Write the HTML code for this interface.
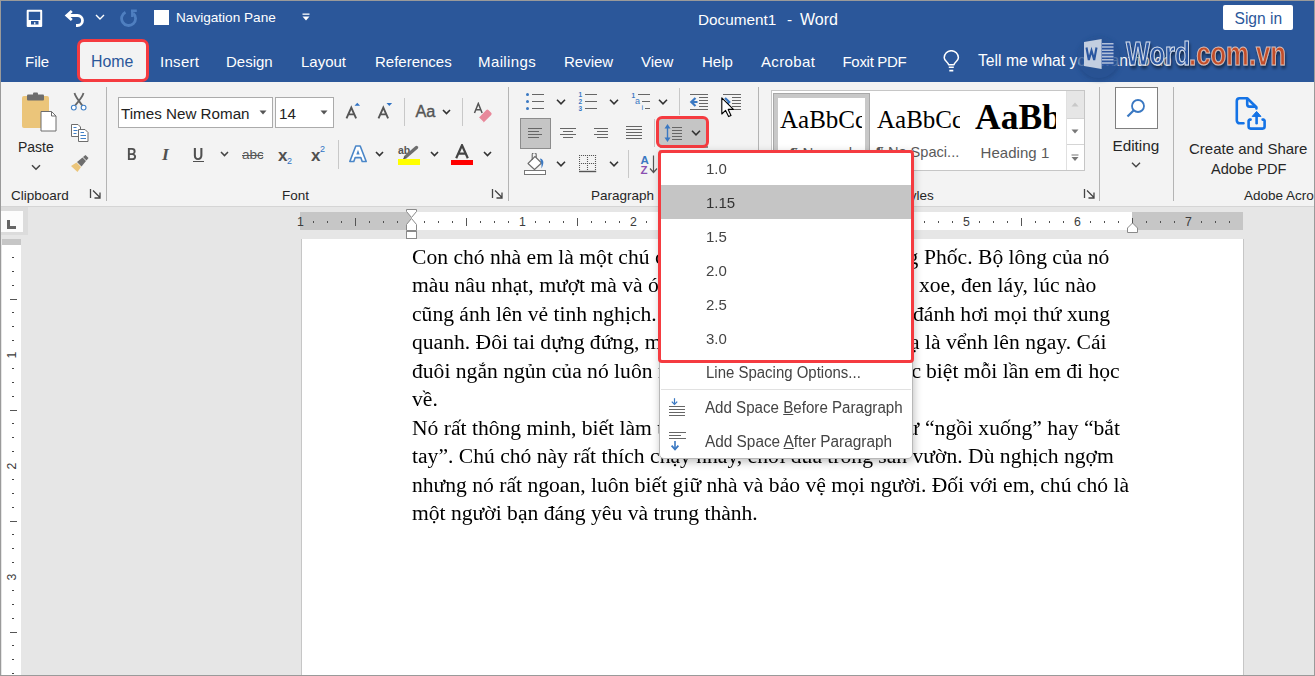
<!DOCTYPE html>
<html><head><meta charset="utf-8">
<style>
*{box-sizing:border-box;margin:0;padding:0}
html,body{width:1315px;height:676px;overflow:hidden;background:#e6e6e6}
body{position:relative;font-family:"Liberation Sans",sans-serif}
.a{position:absolute}
.t{position:absolute;white-space:nowrap;line-height:1}
#title{left:0;top:0;width:1315px;height:82px;background:#2b579a}
.wt{color:#fff}
#ribbon{left:0;top:82px;width:1315px;height:124px;background:#f3f3f3}
#rb{left:0;top:206px;width:1315px;height:1px;background:#d5d5d5}
.sep{position:absolute;width:1px;background:#c8c8c8}
.gsep{position:absolute;width:1px;background:#b4b4b4;top:87px;height:114px}
.lbl{position:absolute;white-space:nowrap;line-height:1;font-size:13.5px;color:#262626}
.doc{will-change:transform;font-family:"Liberation Serif",serif;font-size:21.6px;color:#000;position:absolute;white-space:nowrap;line-height:1}
#frame{left:0;top:0;width:1315px;height:676px;border:1px solid #9a9a9a;pointer-events:none}
</style></head><body>
<div id="title" class="a"></div>

<!-- title bar -->
<svg class="a" style="left:26px;top:9px" width="18" height="18" viewBox="0 0 18 18">
 <path d="M1.7 1.7 H15.2 V17 H1.7 Z" fill="none" stroke="#fff" stroke-width="2" stroke-linejoin="round"/>
 <rect x="1" y="11" width="15" height="6" fill="#fff"/>
 <rect x="5" y="12" width="7.5" height="3.5" fill="#2b579a"/>
 <rect x="8.1" y="13.2" width="1.3" height="2.3" fill="#fff"/>
</svg>
<svg class="a" style="left:64px;top:9px" width="22" height="19" viewBox="0 0 22 19">
 <path d="M3.5 6.5 H13.5 A5 5 0 0 1 13.5 16.5 H12" fill="none" stroke="#fff" stroke-width="2.8"/>
 <path d="M7.8 2 L2.8 6.5 L7.8 11" fill="none" stroke="#fff" stroke-width="2.8" stroke-linejoin="miter"/>
</svg>
<svg class="a" style="left:95px;top:14px" width="10" height="6" viewBox="0 0 10 6"><path d="M1 1 L5 5 L9 1" fill="none" stroke="#fff" stroke-width="1.4"/></svg>
<svg class="a" style="left:120px;top:9px" width="19" height="19" viewBox="0 0 19 19">
 <path d="M13.2 4.2 A7 7 0 1 1 5.5 3.2" fill="none" stroke="#4f7fc0" stroke-width="2.8"/>
 <path d="M11 1.8 H16.8 M12.3 1.8 V8" fill="none" stroke="#4f7fc0" stroke-width="2.4"/>
</svg>
<div class="a" style="left:154px;top:10px;width:15px;height:15px;background:#fff"></div>
<div class="t wt" style="left:176px;top:11px;font-size:13.6px">Navigation Pane</div>
<svg class="a" style="left:302px;top:13px" width="8" height="9" viewBox="0 0 8 9"><rect x="0.5" y="0.5" width="7" height="1.3" fill="#fff"/><path d="M0.5 3.5 H7.5 L4 7.5 Z" fill="#fff"/></svg>
<div class="t wt" style="left:698px;top:12px;font-size:15.3px">Document1</div>
<div class="t wt" style="left:787px;top:12px;font-size:15.3px">-</div>
<div class="t wt" style="left:800px;top:12px;font-size:16px">Word</div>
<div class="a" style="left:1223px;top:5px;width:70px;height:25px;background:#fff;border-radius:2px"></div>
<div class="t" style="left:1234.5px;top:11px;font-size:15.6px;color:#2b579a">Sign in</div>

<!-- tabs -->
<div class="t wt" style="left:25px;top:54px;font-size:15px">File</div>
<div class="a" style="left:77px;top:39px;width:72px;height:43px;background:#f3f3f3;border:3px solid #f53b40;border-radius:7px"></div>
<div class="t" style="left:91px;top:53.5px;font-size:15.9px;color:#2b579a">Home</div>
<div class="t wt" style="left:160px;top:54px;font-size:15px;letter-spacing:0.3px">Insert</div>
<div class="t wt" style="left:226px;top:54px;font-size:15px">Design</div>
<div class="t wt" style="left:301px;top:54px;font-size:15px">Layout</div>
<div class="t wt" style="left:375px;top:54px;font-size:15px">References</div>
<div class="t wt" style="left:478px;top:54px;font-size:15px;letter-spacing:0.4px">Mailings</div>
<div class="t wt" style="left:564px;top:54px;font-size:15px">Review</div>
<div class="t wt" style="left:641px;top:54px;font-size:15px">View</div>
<div class="t wt" style="left:702px;top:54px;font-size:15px">Help</div>
<div class="t wt" style="left:761px;top:54px;font-size:15px;letter-spacing:0.35px">Acrobat</div>
<div class="t wt" style="left:842.5px;top:54px;font-size:15px;letter-spacing:-0.3px">Foxit PDF</div>
<svg class="a" style="left:942px;top:50px" width="20" height="23" viewBox="0 0 20 23">
 <path d="M6.6 14.8 C6.6 12.2 2.2 11 2.2 7.8 A7.1 7.1 0 0 1 16.4 7.8 C16.4 11 12 12.2 12 14.8 Z" fill="none" stroke="#fff" stroke-width="1.5" stroke-linejoin="round"/>
 <path d="M6.8 17.2 H11.8 M7.3 20.6 H11.3" stroke="#fff" stroke-width="1.6"/>
</svg>
<div class="t wt" style="left:978px;top:53px;font-size:15.7px">Tell me what you want to do</div>
<div id="ribbon" class="a"></div>
<div id="rb" class="a"></div>
<!-- CLIPBOARD -->
<svg class="a" style="left:20px;top:92px" width="38" height="41" viewBox="0 0 38 41">
 <rect x="2" y="4" width="27" height="32" rx="2" fill="#ebc57a"/>
 <rect x="7" y="2.5" width="17" height="6" rx="1" fill="#6d6d6d"/>
 <rect x="13" y="0.5" width="5" height="4" rx="1" fill="#6d6d6d"/>
 <path d="M21 19.5 H31.5 L36 24 V39 H21 Z" fill="#fff" stroke="#6d6d6d" stroke-width="1"/>
 <path d="M31.5 19.5 V24 H36" fill="none" stroke="#6d6d6d" stroke-width="1"/>
</svg>
<div class="t" style="left:18px;top:140px;font-size:14px;color:#262626">Paste</div>
<svg class="a" style="left:31px;top:164px" width="10" height="7" viewBox="0 0 10 7"><path d="M1 1.2 L5 5.2 L9 1.2" fill="none" stroke="#444" stroke-width="1.5"/></svg>
<svg class="a" style="left:70px;top:92px" width="19" height="20" viewBox="0 0 19 20">
 <path d="M4.5 1 C5.5 5 9 9 12.2 13.4 M13.5 1 C12.5 5 9 9 5.2 13.4" fill="none" stroke="#666" stroke-width="1.8"/>
 <circle cx="3.8" cy="15.6" r="2.4" fill="#fff" stroke="#3f7fc6" stroke-width="1.1"/>
 <circle cx="13.6" cy="15.6" r="2.4" fill="#fff" stroke="#3f7fc6" stroke-width="1.1"/>
</svg>
<svg class="a" style="left:70px;top:123px" width="20" height="20" viewBox="0 0 20 20">
 <path d="M1.5 1.5 H8 L10.5 4 V13.5 H1.5 Z" fill="#fff" stroke="#6d6d6d" stroke-width="1"/>
 <path d="M3.5 4.5 H6.5 M3.5 7.5 H7.5 M3.5 10.5 H6.5" stroke="#3f7fc6" stroke-width="1"/>
 <path d="M8.5 6.5 H15 L18 9.5 V18.5 H8.5 Z" fill="#fff" stroke="#6d6d6d" stroke-width="1"/>
 <path d="M10.5 9.5 H14 M10.5 12.5 H16 M10.5 15.5 H16" stroke="#3f7fc6" stroke-width="1"/>
</svg>
<svg class="a" style="left:70px;top:155px" width="20" height="18" viewBox="0 0 20 18">
 <path d="M1 11 L6.5 7.5 L11 12 L7.5 17 Z" fill="#ebc57a"/>
 <path d="M7 7 L12.5 2.5 L16 6 L11.5 11.5 Z" fill="#6d6d6d"/>
 <path d="M13 2 L15.5 0 L18.5 3 L16.5 5.5 Z" fill="#6d6d6d"/>
</svg>
<div class="lbl" style="left:11px;top:189px">Clipboard</div>
<svg class="a" style="left:89px;top:188px" width="13" height="12" viewBox="0 0 13 12"><path d="M1.5 1 V10" stroke="#444" stroke-width="1.3"/><path d="M4 2.5 L11 9.5 M11 4.5 V10 H5.5" fill="none" stroke="#444" stroke-width="1.3"/></svg>
<div class="gsep" style="left:106px"></div>




<!-- WATERMARK -->
<svg class="a" style="left:1060px;top:28px" width="240" height="56" viewBox="0 0 240 56">
 <defs>
  <filter id="sh" x="-20%" y="-20%" width="140%" height="160%"><feGaussianBlur in="SourceAlpha" stdDeviation="1.6"/><feOffset dx="1" dy="2.5"/><feComponentTransfer><feFuncA type="linear" slope="0.5"/></feComponentTransfer><feMerge><feMergeNode/><feMergeNode in="SourceGraphic"/></feMerge></filter>
  <filter id="cs" x="-30%" y="-30%" width="160%" height="160%"><feGaussianBlur stdDeviation="2"/></filter>
 </defs>
 <circle cx="39" cy="31" r="21.5" fill="#1a3f78" opacity="0.5" filter="url(#cs)"/>
 <circle cx="38.5" cy="29" r="21" fill="#2b569a" opacity="0.6"/>
 <rect x="41" y="14.5" width="13" height="23" fill="#2a54a0" opacity="0.85"/>
 <path d="M42 15.8 H53.5 M42 19 H53.5 M42 22.2 H53.5 M42 25.4 H53.5 M42 28.6 H53.5 M42 31.8 H53.5 M42 35 H53.5" stroke="#c9d3e3" stroke-width="1.6" opacity="0.85"/>
 <path d="M24 14 L41.6 11 V41 L24 38 Z" fill="#c3cee0"/>
 <path d="M26.5 19.5 L28.8 32 L31.5 22.5 L34.2 32 L36.5 19.5" fill="none" stroke="#2a56a0" stroke-width="2.1" stroke-linejoin="miter"/>
 <g filter="url(#sh)" font-family="Liberation Sans" font-weight="bold" font-size="34">
  <text x="0" y="38" transform="translate(66,0) scale(0.745,0.97)" fill="#2b56a0" stroke="#e8ecf3" stroke-width="1.2" stroke-opacity="0.9">Word</text>
  <text x="0" y="38" transform="translate(129,0) scale(0.755,0.97)" fill="#c24e2a" stroke="#eed6cc" stroke-width="1.1" stroke-opacity="0.8">.com.vn</text>
 </g>
</svg>
<!-- RULERS -->
<div class="a" style="left:1px;top:207px;width:27px;height:28px;background:#dcdcdc"></div>
<div class="a" style="left:1px;top:211px;width:22px;height:21px;background:#fcfcfc"></div>
<div class="a" style="left:7px;top:220px;width:2.5px;height:8.5px;background:#666"></div><div class="a" style="left:7px;top:226px;width:9px;height:2.5px;background:#666"></div>
<div class="a" style="left:300px;top:212px;width:943px;height:18px;background:#c6c6c6"></div>
<div class="a" style="left:411px;top:212px;width:721px;height:18px;background:#fff"></div>
<div class="a" style="left:313.4px;top:221px;width:1px;height:2px;background:#505050"></div>
<div class="a" style="left:327.2px;top:221px;width:1px;height:2px;background:#505050"></div>
<div class="a" style="left:341.1px;top:221px;width:1px;height:2px;background:#505050"></div>
<div class="a" style="left:355.0px;top:218px;width:1px;height:8px;background:#555"></div>
<div class="a" style="left:368.9px;top:221px;width:1px;height:2px;background:#505050"></div>
<div class="a" style="left:382.8px;top:221px;width:1px;height:2px;background:#505050"></div>
<div class="a" style="left:396.6px;top:221px;width:1px;height:2px;background:#505050"></div>
<div class="a" style="left:424.4px;top:221px;width:1px;height:2px;background:#505050"></div>
<div class="a" style="left:438.2px;top:221px;width:1px;height:2px;background:#505050"></div>
<div class="a" style="left:452.1px;top:221px;width:1px;height:2px;background:#505050"></div>
<div class="a" style="left:466.0px;top:218px;width:1px;height:8px;background:#555"></div>
<div class="a" style="left:479.9px;top:221px;width:1px;height:2px;background:#505050"></div>
<div class="a" style="left:493.8px;top:221px;width:1px;height:2px;background:#505050"></div>
<div class="a" style="left:507.6px;top:221px;width:1px;height:2px;background:#505050"></div>
<div class="t" style="left:297.0px;top:216px;width:7px;text-align:center;font-size:12.3px;color:#3c3c3c">1</div>
<div class="t" style="left:519.0px;top:216px;width:7px;text-align:center;font-size:12.3px;color:#3c3c3c">1</div>
<div class="a" style="left:535.4px;top:221px;width:1px;height:2px;background:#505050"></div>
<div class="a" style="left:549.2px;top:221px;width:1px;height:2px;background:#505050"></div>
<div class="a" style="left:563.1px;top:221px;width:1px;height:2px;background:#505050"></div>
<div class="a" style="left:577.0px;top:218px;width:1px;height:8px;background:#555"></div>
<div class="a" style="left:590.9px;top:221px;width:1px;height:2px;background:#505050"></div>
<div class="a" style="left:604.8px;top:221px;width:1px;height:2px;background:#505050"></div>
<div class="a" style="left:618.6px;top:221px;width:1px;height:2px;background:#505050"></div>
<div class="t" style="left:630.0px;top:216px;width:7px;text-align:center;font-size:12.3px;color:#3c3c3c">2</div>
<div class="a" style="left:646.4px;top:221px;width:1px;height:2px;background:#505050"></div>
<div class="a" style="left:660.2px;top:221px;width:1px;height:2px;background:#505050"></div>
<div class="a" style="left:674.1px;top:221px;width:1px;height:2px;background:#505050"></div>
<div class="a" style="left:688.0px;top:218px;width:1px;height:8px;background:#555"></div>
<div class="a" style="left:701.9px;top:221px;width:1px;height:2px;background:#505050"></div>
<div class="a" style="left:715.8px;top:221px;width:1px;height:2px;background:#505050"></div>
<div class="a" style="left:729.6px;top:221px;width:1px;height:2px;background:#505050"></div>
<div class="t" style="left:741.0px;top:216px;width:7px;text-align:center;font-size:12.3px;color:#3c3c3c">3</div>
<div class="a" style="left:757.4px;top:221px;width:1px;height:2px;background:#505050"></div>
<div class="a" style="left:771.2px;top:221px;width:1px;height:2px;background:#505050"></div>
<div class="a" style="left:785.1px;top:221px;width:1px;height:2px;background:#505050"></div>
<div class="a" style="left:799.0px;top:218px;width:1px;height:8px;background:#555"></div>
<div class="a" style="left:812.9px;top:221px;width:1px;height:2px;background:#505050"></div>
<div class="a" style="left:826.8px;top:221px;width:1px;height:2px;background:#505050"></div>
<div class="a" style="left:840.6px;top:221px;width:1px;height:2px;background:#505050"></div>
<div class="t" style="left:852.0px;top:216px;width:7px;text-align:center;font-size:12.3px;color:#3c3c3c">4</div>
<div class="a" style="left:868.4px;top:221px;width:1px;height:2px;background:#505050"></div>
<div class="a" style="left:882.2px;top:221px;width:1px;height:2px;background:#505050"></div>
<div class="a" style="left:896.1px;top:221px;width:1px;height:2px;background:#505050"></div>
<div class="a" style="left:910.0px;top:218px;width:1px;height:8px;background:#555"></div>
<div class="a" style="left:923.9px;top:221px;width:1px;height:2px;background:#505050"></div>
<div class="a" style="left:937.8px;top:221px;width:1px;height:2px;background:#505050"></div>
<div class="a" style="left:951.6px;top:221px;width:1px;height:2px;background:#505050"></div>
<div class="t" style="left:963.0px;top:216px;width:7px;text-align:center;font-size:12.3px;color:#3c3c3c">5</div>
<div class="a" style="left:979.4px;top:221px;width:1px;height:2px;background:#505050"></div>
<div class="a" style="left:993.2px;top:221px;width:1px;height:2px;background:#505050"></div>
<div class="a" style="left:1007.1px;top:221px;width:1px;height:2px;background:#505050"></div>
<div class="a" style="left:1021.0px;top:218px;width:1px;height:8px;background:#555"></div>
<div class="a" style="left:1034.9px;top:221px;width:1px;height:2px;background:#505050"></div>
<div class="a" style="left:1048.8px;top:221px;width:1px;height:2px;background:#505050"></div>
<div class="a" style="left:1062.6px;top:221px;width:1px;height:2px;background:#505050"></div>
<div class="t" style="left:1074.0px;top:216px;width:7px;text-align:center;font-size:12.3px;color:#3c3c3c">6</div>
<div class="a" style="left:1090.4px;top:221px;width:1px;height:2px;background:#505050"></div>
<div class="a" style="left:1104.2px;top:221px;width:1px;height:2px;background:#505050"></div>
<div class="a" style="left:1118.1px;top:221px;width:1px;height:2px;background:#505050"></div>
<div class="a" style="left:1145.9px;top:221px;width:1px;height:2px;background:#505050"></div>
<div class="a" style="left:1159.8px;top:221px;width:1px;height:2px;background:#505050"></div>
<div class="a" style="left:1173.6px;top:221px;width:1px;height:2px;background:#505050"></div>
<div class="t" style="left:1185.0px;top:216px;width:7px;text-align:center;font-size:12.3px;color:#3c3c3c">7</div>
<div class="a" style="left:1201.4px;top:221px;width:1px;height:2px;background:#505050"></div>
<div class="a" style="left:1215.2px;top:221px;width:1px;height:2px;background:#505050"></div>
<div class="a" style="left:1229.1px;top:221px;width:1px;height:2px;background:#505050"></div>
<svg class="a" style="left:405px;top:208px" width="13" height="32" viewBox="0 0 13 32">
<path d="M1.5 1.5 H11.5 V3.5 L6.5 9.5 L1.5 3.5 Z" fill="#fff" stroke="#8a8a8a" stroke-width="1"/>
<path d="M6.5 10.5 L11.5 16.5 V22.5 H1.5 V16.5 Z" fill="#fff" stroke="#8a8a8a" stroke-width="1"/>
<rect x="1.5" y="23.5" width="10" height="7" fill="#fff" stroke="#8a8a8a" stroke-width="1"/>
</svg>
<div class="a" style="left:1131.5px;top:218px;width:1px;height:6px;background:#555"></div>
<svg class="a" style="left:1126px;top:222px" width="13" height="12" viewBox="0 0 13 12">
<path d="M6.5 1 L11.5 6 V10.5 H1.5 V6 Z" fill="#fff" stroke="#8a8a8a" stroke-width="1"/>
</svg>
<div class="a" style="left:2px;top:239px;width:19px;height:437px;background:#fff"></div>
<div class="a" style="left:2px;top:239px;width:19px;height:6px;background:#c6c6c6"></div>
<div class="a" style="left:12px;top:256.9px;width:2px;height:1px;background:#444"></div>
<div class="a" style="left:12px;top:270.8px;width:2px;height:1px;background:#444"></div>
<div class="a" style="left:12px;top:284.6px;width:2px;height:1px;background:#444"></div>
<div class="a" style="left:10px;top:298.5px;width:7px;height:1px;background:#555"></div>
<div class="a" style="left:12px;top:312.4px;width:2px;height:1px;background:#444"></div>
<div class="a" style="left:12px;top:326.2px;width:2px;height:1px;background:#444"></div>
<div class="a" style="left:12px;top:340.1px;width:2px;height:1px;background:#444"></div>
<div class="t" style="left:6px;top:348.5px;width:12px;height:12px;text-align:center;font-size:12.3px;line-height:12px;color:#3c3c3c;transform:rotate(-90deg)">1</div>
<div class="a" style="left:12px;top:367.9px;width:2px;height:1px;background:#444"></div>
<div class="a" style="left:12px;top:381.8px;width:2px;height:1px;background:#444"></div>
<div class="a" style="left:12px;top:395.6px;width:2px;height:1px;background:#444"></div>
<div class="a" style="left:10px;top:409.5px;width:7px;height:1px;background:#555"></div>
<div class="a" style="left:12px;top:423.4px;width:2px;height:1px;background:#444"></div>
<div class="a" style="left:12px;top:437.2px;width:2px;height:1px;background:#444"></div>
<div class="a" style="left:12px;top:451.1px;width:2px;height:1px;background:#444"></div>
<div class="t" style="left:6px;top:459.5px;width:12px;height:12px;text-align:center;font-size:12.3px;line-height:12px;color:#3c3c3c;transform:rotate(-90deg)">2</div>
<div class="a" style="left:12px;top:478.9px;width:2px;height:1px;background:#444"></div>
<div class="a" style="left:12px;top:492.8px;width:2px;height:1px;background:#444"></div>
<div class="a" style="left:12px;top:506.6px;width:2px;height:1px;background:#444"></div>
<div class="a" style="left:10px;top:520.5px;width:7px;height:1px;background:#555"></div>
<div class="a" style="left:12px;top:534.4px;width:2px;height:1px;background:#444"></div>
<div class="a" style="left:12px;top:548.2px;width:2px;height:1px;background:#444"></div>
<div class="a" style="left:12px;top:562.1px;width:2px;height:1px;background:#444"></div>
<div class="t" style="left:6px;top:570.5px;width:12px;height:12px;text-align:center;font-size:12.3px;line-height:12px;color:#3c3c3c;transform:rotate(-90deg)">3</div>
<div class="a" style="left:12px;top:589.9px;width:2px;height:1px;background:#444"></div>
<div class="a" style="left:12px;top:603.8px;width:2px;height:1px;background:#444"></div>
<div class="a" style="left:12px;top:617.6px;width:2px;height:1px;background:#444"></div>
<div class="a" style="left:10px;top:631.5px;width:7px;height:1px;background:#555"></div>
<div class="a" style="left:12px;top:645.4px;width:2px;height:1px;background:#444"></div>
<div class="a" style="left:12px;top:659.2px;width:2px;height:1px;background:#444"></div>
<div class="a" style="left:12px;top:673.1px;width:2px;height:1px;background:#444"></div>
<!-- page -->
<div class="a" style="left:301px;top:239px;width:943px;height:440px;background:#fff;border-left:1px solid #c6c6c6;border-right:1px solid #c6c6c6"></div>


<!-- FONT -->
<div class="a" style="left:118px;top:97px;width:155px;height:31px;background:#fff;border:1px solid #ababab"></div>
<div class="t" style="left:121px;top:106px;font-size:15.2px;color:#222">Times New Roman</div>
<svg class="a" style="left:259px;top:110px" width="8" height="5" viewBox="0 0 8 5"><path d="M0.5 0.5 H7.5 L4 4.5 Z" fill="#555"/></svg>
<div class="a" style="left:275px;top:97px;width:59px;height:31px;background:#fff;border:1px solid #ababab"></div>
<div class="t" style="left:279px;top:106px;font-size:15.2px;color:#222">14</div>
<svg class="a" style="left:320px;top:110px" width="8" height="5" viewBox="0 0 8 5"><path d="M0.5 0.5 H7.5 L4 4.5 Z" fill="#555"/></svg>
<!-- grow / shrink -->
<svg class="a" style="left:345px;top:102px" width="17" height="18" viewBox="0 0 17 18">
 <path d="M1.5 16.3 L6.3 5.6 L11.1 16.3 M3.5 12.4 H9.1" fill="none" stroke="#555" stroke-width="1.9"/>
 <path d="M9.5 3.8 L12.3 0.8 L15.1 3.8 Z" fill="#2f72c4"/>
</svg>
<svg class="a" style="left:377px;top:102px" width="17" height="18" viewBox="0 0 17 18">
 <path d="M1.5 16.3 L6.3 5.6 L11.1 16.3 M3.5 12.4 H9.1" fill="none" stroke="#555" stroke-width="1.9"/>
 <path d="M9.5 1 H15.1 L12.3 3.9 Z" fill="#2f72c4"/>
</svg>
<div class="sep" style="left:404px;top:98px;height:28px"></div>
<div class="t" style="left:415.5px;top:103px;font-size:16.3px;color:#555;-webkit-text-stroke:0.4px #555">Aa</div>
<svg class="a" style="left:442px;top:109px" width="9" height="6" viewBox="0 0 9 6"><path d="M1 1 L4.5 4.6 L8 1" fill="none" stroke="#333" stroke-width="1.6"/></svg>
<div class="sep" style="left:462px;top:98px;height:28px"></div>
<svg class="a" style="left:473px;top:102px" width="21" height="21" viewBox="0 0 21 21">
 <path d="M1.5 11 L5.3 1.5 L9.1 11 M3 7.8 H7.6" fill="none" stroke="#555" stroke-width="1.5"/>
 <path d="M6.5 15 L13.3 8 A1.5 1.5 0 0 1 15.4 8 L18.2 10.8 A1.5 1.5 0 0 1 18.2 12.9 L11.4 19.7 A1.5 1.5 0 0 1 9.3 19.7 L6.5 17 A1.5 1.5 0 0 1 6.5 15 Z" fill="#e8889a"/>
 <path d="M6 16.2 L10.3 20.5" stroke="#f3f3f3" stroke-width="1.2"/>
</svg>
<!-- B I U -->
<div class="t" style="left:126.5px;top:146.5px;font-size:15.8px;font-weight:bold;color:#505050;transform:scaleX(0.85);transform-origin:0 0">B</div>
<div class="t" style="left:162px;top:146px;font-size:17.5px;font-weight:bold;font-style:italic;color:#505050;font-family:'Liberation Serif',serif">I</div>
<div class="t" style="left:192.5px;top:147px;font-size:15.8px;font-weight:bold;color:#505050;transform:scaleX(0.9);transform-origin:0 0">U</div>
<div class="a" style="left:193px;top:160.5px;width:11px;height:1.5px;background:#505050"></div>
<svg class="a" style="left:220px;top:151px" width="9" height="6" viewBox="0 0 9 6"><path d="M1 1 L4.5 4.6 L8 1" fill="none" stroke="#444" stroke-width="1.5"/></svg>
<div class="t" style="left:242px;top:148px;font-size:13.5px;color:#555">abc</div>
<div class="a" style="left:242px;top:155px;width:21px;height:1.3px;background:#555"></div>
<div class="t" style="left:278px;top:146.5px;font-size:17px;font-weight:bold;color:#505050">x</div>
<div class="t" style="left:287px;top:157px;font-size:9px;color:#2f72c4">2</div>
<div class="t" style="left:311px;top:146.5px;font-size:17px;font-weight:bold;color:#505050">x</div>
<div class="t" style="left:320px;top:145px;font-size:9px;color:#2f72c4">2</div>
<div class="sep" style="left:338px;top:140px;height:29px"></div>
<!-- text effects -->
<svg class="a" style="left:348px;top:144px" width="20" height="20" viewBox="0 0 20 20">
 <path d="M1.8 17.5 L7.8 2 H12.2 L18.2 17.5 H14.2 L12.8 13.6 H7.2 L5.8 17.5 Z" fill="#fff" stroke="#4a86c8" stroke-width="1.6" stroke-linejoin="round"/>
 <path d="M8.3 10.6 L10 5.8 L11.7 10.6 Z" fill="#4a86c8"/>
</svg>
<svg class="a" style="left:375px;top:151px" width="9" height="6" viewBox="0 0 9 6"><path d="M1 1 L4.5 4.6 L8 1" fill="none" stroke="#333" stroke-width="1.6"/></svg>
<div class="t" style="left:398px;top:145px;font-size:10.5px;font-weight:bold;color:#555">ab</div>
<svg class="a" style="left:402px;top:145px" width="18" height="15" viewBox="0 0 18 15">
 <path d="M3.5 12 L14.5 2.5" stroke="#6d6d6d" stroke-width="3.4" stroke-linecap="round"/>
 <path d="M1.5 14 L3.5 12" stroke="#555" stroke-width="1.4"/>
</svg>
<div class="a" style="left:398px;top:159px;width:22px;height:6px;background:#ffff00"></div>
<svg class="a" style="left:430px;top:151px" width="9" height="6" viewBox="0 0 9 6"><path d="M1 1 L4.5 4.6 L8 1" fill="none" stroke="#333" stroke-width="1.6"/></svg>
<svg class="a" style="left:455px;top:144px" width="14" height="15" viewBox="0 0 14 15">
 <path d="M1.2 14.3 L7 1.2 L12.8 14.3 M3.5 9.6 H10.5" fill="none" stroke="#444" stroke-width="2.2"/>
</svg>
<div class="a" style="left:451px;top:160px;width:22px;height:5px;background:#ff0000"></div>
<svg class="a" style="left:483px;top:151px" width="9" height="6" viewBox="0 0 9 6"><path d="M1 1 L4.5 4.6 L8 1" fill="none" stroke="#333" stroke-width="1.6"/></svg>
<div class="lbl" style="left:282px;top:189px">Font</div>
<svg class="a" style="left:491px;top:188px" width="13" height="12" viewBox="0 0 13 12"><path d="M1.5 1 V10" stroke="#444" stroke-width="1.3"/><path d="M4 2.5 L11 9.5 M11 4.5 V10 H5.5" fill="none" stroke="#444" stroke-width="1.3"/></svg>
<div class="gsep" style="left:508px"></div>

<!-- PARAGRAPH -->
<svg class="a" style="left:525px;top:92px" width="21" height="19" viewBox="0 0 21 19">
 <circle cx="2.5" cy="2.5" r="1.5" fill="#3a78c2"/><circle cx="2.5" cy="9.5" r="1.5" fill="#3a78c2"/><circle cx="2.5" cy="16.5" r="1.5" fill="#3a78c2"/>
 <path d="M7 2.5 H19 M7 9.5 H19 M7 16.5 H19" stroke="#666" stroke-width="1"/>
</svg>
<svg class="a" style="left:556px;top:99px" width="10" height="6" viewBox="0 0 10 6"><path d="M1 0.8 L5 4.8 L9 0.8" fill="none" stroke="#333" stroke-width="1.6"/></svg>
<svg class="a" style="left:577px;top:92px" width="21" height="19" viewBox="0 0 21 19" font-family="Liberation Sans" font-weight="bold" font-size="6.5" fill="#3a78c2">
 <text x="1.6" y="5.3">1</text><text x="1.6" y="12.3">2</text><text x="1.6" y="19.2">3</text>
 <path d="M8 2.5 H20 M8 9.5 H20 M8 16.5 H20" stroke="#666" stroke-width="1"/>
</svg>
<svg class="a" style="left:609px;top:99px" width="10" height="6" viewBox="0 0 10 6"><path d="M1 0.8 L5 4.8 L9 0.8" fill="none" stroke="#333" stroke-width="1.6"/></svg>
<svg class="a" style="left:630px;top:92px" width="21" height="19" viewBox="0 0 21 19" font-family="Liberation Sans" fill="#3a78c2">
 <text x="1.5" y="5.5" font-size="6.5" font-weight="bold">1</text>
 <text x="5" y="12.2" font-size="9">a</text>
 <text x="11.5" y="18.2" font-size="7.5">i</text>
 <path d="M8 2.5 H20 M12 9.5 H20 M15 16.5 H20" stroke="#666" stroke-width="1"/>
</svg>
<svg class="a" style="left:658px;top:99px" width="10" height="6" viewBox="0 0 10 6"><path d="M1 0.8 L5 4.8 L9 0.8" fill="none" stroke="#333" stroke-width="1.6"/></svg>
<div class="sep" style="left:679px;top:88px;height:27px"></div>
<svg class="a" style="left:689px;top:93px" width="21" height="18" viewBox="0 0 21 18">
 <path d="M1 1.5 H19 M10 4.5 H19 M10 7.5 H19 M10 10.5 H19 M10 13.5 H19 M1 16.5 H19" stroke="#666" stroke-width="1"/>
 <path d="M8.5 9 H2.5 M6.5 5 L2.3 9 L6.5 13" fill="none" stroke="#3a78c2" stroke-width="2.2"/>
</svg>
<svg class="a" style="left:722px;top:93px" width="21" height="18" viewBox="0 0 21 18">
 <path d="M1 1.5 H19 M10 4.5 H19 M10 7.5 H19 M10 10.5 H19 M10 13.5 H19 M1 16.5 H19" stroke="#666" stroke-width="1"/>
 <path d="M3 5 L7.2 9 L3 13" fill="none" stroke="#3a78c2" stroke-width="2.2"/>
</svg>
<!-- mouse cursor -->
<svg class="a" style="left:720.5px;top:96.5px" width="14" height="21" viewBox="0 0 14 21">
 <path d="M0.8 0.8 V17 L4.6 13.4 L7.6 19.6 L10 18.6 L7.2 12.4 H12.4 Z" fill="#fff" stroke="#000" stroke-width="1.1" stroke-linejoin="round"/>
</svg>
<!-- align -->
<div class="a" style="left:520px;top:118px;width:31px;height:31px;background:#c5c5c5;border:1px solid #8c8c8c"></div>
<svg class="a" style="left:527px;top:127px" width="16" height="12" viewBox="0 0 16 12">
 <path d="M1 1.5 H15 M1 4.5 H12 M1 7.5 H15 M1 10.5 H12" stroke="#666" stroke-width="1"/>
</svg>
<svg class="a" style="left:559px;top:127px" width="18" height="12" viewBox="0 0 18 12">
 <path d="M1 1.5 H17 M4 4.5 H14 M1 7.5 H17 M4 10.5 H14" stroke="#666" stroke-width="1"/>
</svg>
<svg class="a" style="left:593px;top:127px" width="16" height="12" viewBox="0 0 16 12">
 <path d="M1 1.5 H15 M4 4.5 H15 M1 7.5 H15 M4 10.5 H15" stroke="#666" stroke-width="1"/>
</svg>
<svg class="a" style="left:625px;top:125px" width="18" height="15" viewBox="0 0 18 15">
 <path d="M1 1.5 H17 M1 4.5 H17 M1 7.5 H17 M1 10.5 H17 M1 13.5 H17" stroke="#666" stroke-width="1"/>
</svg>
<div class="sep" style="left:654px;top:119px;height:28px"></div>
<!-- line spacing button -->
<div class="a" style="left:660px;top:146px;width:48px;height:2px;background:#8c8c8c"></div>
<div class="a" style="left:656px;top:116px;width:53px;height:32px;background:#c5c5c5;border:3px solid #f53b40;border-radius:6px"></div>
<svg class="a" style="left:664px;top:123px" width="19" height="20" viewBox="0 0 19 20">
 <path d="M3.5 4 V16" stroke="#3a78c2" stroke-width="1.4"/>
 <path d="M0.5 5.5 L3.5 1 L6.5 5.5 Z M0.5 14.5 L3.5 19 L6.5 14.5 Z" fill="#3a78c2"/>
 <path d="M8 4.5 H18 M8 7.5 H18 M8 10.5 H18 M8 13.5 H18 M8 16.5 H18" stroke="#666" stroke-width="1"/>
</svg>
<svg class="a" style="left:691px;top:130px" width="10" height="6" viewBox="0 0 10 6"><path d="M1 0.8 L5 4.8 L9 0.8" fill="none" stroke="#333" stroke-width="1.6"/></svg>
<!-- shading -->
<svg class="a" style="left:523px;top:153px" width="24" height="23" viewBox="0 0 24 23">
 <path d="M9.2 1.8 A2 2 0 0 1 13.2 1.8 V7" fill="none" stroke="#666" stroke-width="1.1"/>
 <path d="M5 10.5 L12 3.5 L18.5 10 L11.5 16.5 Z" fill="#fff" stroke="#6d6d6d" stroke-width="1.1" stroke-linejoin="round"/>
 <path d="M9.2 1.8 V7" fill="none" stroke="#666" stroke-width="1.1"/>
 <path d="M17 5.5 C20 6 22 9 18.5 15.5 C18.5 12 18.5 11 18.2 9.8 Z" fill="#3a78c2"/>
 <rect x="1.5" y="17.5" width="21" height="4" fill="#fff" stroke="#777" stroke-width="1"/>
</svg>
<svg class="a" style="left:556px;top:161px" width="10" height="6" viewBox="0 0 10 6"><path d="M1 0.8 L5 4.8 L9 0.8" fill="none" stroke="#333" stroke-width="1.6"/></svg>
<svg class="a" style="left:579px;top:155px" width="18" height="18" viewBox="0 0 18 18">
 <path d="M0 0.5 h1.1 M0 8.5 h1.1 M2 0.5 h1.1 M2 8.5 h1.1 M4 0.5 h1.1 M4 8.5 h1.1 M6 0.5 h1.1 M6 8.5 h1.1 M8 0.5 h1.1 M8 8.5 h1.1 M10 0.5 h1.1 M10 8.5 h1.1 M12 0.5 h1.1 M12 8.5 h1.1 M14 0.5 h1.1 M14 8.5 h1.1 M16 0.5 h1.1 M16 8.5 h1.1 M0.5 2 v1.1 M8.5 2 v1.1 M16.5 2 v1.1 M0.5 4 v1.1 M8.5 4 v1.1 M16.5 4 v1.1 M0.5 6 v1.1 M8.5 6 v1.1 M16.5 6 v1.1 M0.5 8 v1.1 M8.5 8 v1.1 M16.5 8 v1.1 M0.5 10 v1.1 M8.5 10 v1.1 M16.5 10 v1.1 M0.5 12 v1.1 M8.5 12 v1.1 M16.5 12 v1.1 M0.5 14 v1.1 M8.5 14 v1.1 M16.5 14 v1.1" stroke="#555" stroke-width="1.1"/>
 <path d="M0 16.5 H17.2" stroke="#555" stroke-width="1.4"/>
</svg>
<svg class="a" style="left:609px;top:161px" width="10" height="6" viewBox="0 0 10 6"><path d="M1 0.8 L5 4.8 L9 0.8" fill="none" stroke="#333" stroke-width="1.6"/></svg>
<div class="sep" style="left:628px;top:150px;height:28px"></div>
<div class="t" style="left:640.5px;top:154.5px;font-size:11.5px;font-weight:bold;color:#3a78c2">A</div>
<div class="t" style="left:640.5px;top:164.5px;font-size:11.5px;font-weight:bold;color:#8a4fb0">Z</div>
<svg class="a" style="left:649px;top:155px" width="9" height="19" viewBox="0 0 9 19"><path d="M4.5 0.5 V17.5 M1 13.5 L4.5 17.5 L8 13.5" fill="none" stroke="#555" stroke-width="1.2"/></svg>
<div class="lbl" style="left:591px;top:189px">Paragraph</div>
<div class="gsep" style="left:758px"></div>

<!-- STYLES -->
<div class="a" style="left:771px;top:90px;width:314px;height:81px;background:#fff;border:1px solid #c6c6c6"></div>
<div class="a" style="left:774px;top:94px;width:95px;height:76px;border:4px solid #c8c8c8;box-shadow:0 0 0 1px #a8a8a8"></div>
<div class="a" style="left:778px;top:99px;width:84px;height:40px;overflow:hidden"><div class="t" style="left:2px;top:8.3px;font-family:'Liberation Serif',serif;font-size:25px;color:#000">AaBbCcDd</div></div>
<div class="a" style="left:874px;top:99px;width:86px;height:40px;overflow:hidden"><div class="t" style="left:3px;top:8.3px;font-family:'Liberation Serif',serif;font-size:25px;color:#000">AaBbCcDd</div></div>
<div class="a" style="left:972px;top:94px;width:84px;height:45px;overflow:hidden"><div class="t" style="left:3px;top:6.3px;font-family:'Liberation Serif',serif;font-size:35.5px;font-weight:bold;color:#000">AaBbC</div></div>
<div class="t" style="left:790px;top:145px;font-size:15px;letter-spacing:0.2px;color:#5a5a5a">¶ Normal</div>
<div class="t" style="left:876px;top:145px;font-size:14.6px;color:#5a5a5a">¶ No Spaci...</div>
<div class="t" style="left:980.5px;top:145px;font-size:15px;letter-spacing:0.05px;color:#5a5a5a">Heading 1</div>
<div class="a" style="left:1066px;top:91px;width:18px;height:79px;border-left:1px solid #e0e0e0"></div>
<div class="a" style="left:1067px;top:91px;width:17px;height:28px;background:#e6e6e6"></div>
<div class="a" style="left:1067px;top:118px;width:17px;height:1px;background:#d5d5d5"></div>
<div class="a" style="left:1067px;top:144px;width:17px;height:1px;background:#d5d5d5"></div>
<svg class="a" style="left:1071px;top:102px" width="8" height="5" viewBox="0 0 8 5"><path d="M0.5 4.5 L4 0.5 L7.5 4.5 Z" fill="#c8c8c8"/></svg>
<svg class="a" style="left:1071px;top:129px" width="8" height="5" viewBox="0 0 8 5"><path d="M0.5 0.5 H7.5 L4 4.5 Z" fill="#777"/></svg>
<svg class="a" style="left:1071px;top:154px" width="8" height="8" viewBox="0 0 8 8"><path d="M0.5 1 H7.5" stroke="#777" stroke-width="1"/><path d="M0.5 3 H7.5 L4 7 Z" fill="#777"/></svg>
<div class="lbl" style="left:897px;top:189px">Styles</div>
<svg class="a" style="left:1083px;top:188px" width="13" height="12" viewBox="0 0 13 12"><path d="M1.5 1 V10" stroke="#444" stroke-width="1.3"/><path d="M4 2.5 L11 9.5 M11 4.5 V10 H5.5" fill="none" stroke="#444" stroke-width="1.3"/></svg>
<div class="gsep" style="left:1099px"></div>
<!-- EDITING -->
<div class="a" style="left:1115px;top:87px;width:43px;height:42px;background:#fff;border:1px solid #7f7f7f"></div>
<svg class="a" style="left:1126px;top:98px" width="20" height="20" viewBox="0 0 20 20"><circle cx="12" cy="8" r="6" fill="none" stroke="#3a78c2" stroke-width="1.8"/><path d="M7.8 12.2 L1.5 18.5" stroke="#3a78c2" stroke-width="2.2"/></svg>
<div class="t" style="left:1112.5px;top:137.5px;font-size:15.3px;color:#262626">Editing</div>
<svg class="a" style="left:1131px;top:162px" width="10" height="6" viewBox="0 0 10 6"><path d="M1 0.8 L5 4.8 L9 0.8" fill="none" stroke="#444" stroke-width="1.4"/></svg>
<div class="gsep" style="left:1173px"></div>
<!-- ADOBE -->
<svg class="a" style="left:1230px;top:92px" width="40" height="42" viewBox="0 0 40 42">
 <path d="M13.5 31.3 H9.6 A2.8 2.8 0 0 1 6.8 28.5 V9 A2.8 2.8 0 0 1 9.6 6.2 H17.2 L26.4 15.2 V16.4" fill="none" stroke="#1473e6" stroke-width="2.6" stroke-linejoin="round" stroke-linecap="round"/>
 <path d="M17.2 6.5 V12.3 A2.3 2.3 0 0 0 19.5 14.6 H26" fill="none" stroke="#1473e6" stroke-width="2.6" stroke-linejoin="round"/>
 <path d="M20.6 27.6 H19.8 A1.6 1.6 0 0 0 18.6 28.8 V34.6 A2 2 0 0 0 20.6 36.6 H32.6 A2 2 0 0 0 34.6 34.6 V28.8 A1.6 1.6 0 0 0 33.4 27.6 H32.6" fill="none" stroke="#1473e6" stroke-width="2.6" stroke-linecap="round"/>
 <path d="M26.6 31.2 V22" stroke="#1473e6" stroke-width="2.6" stroke-linecap="round"/>
 <path d="M22.2 24.4 L26.6 19.4 L31 24.4 Z" fill="#1473e6" stroke="#1473e6" stroke-width="1" stroke-linejoin="round"/>
</svg>
<div class="t" style="left:1189px;top:140.8px;font-size:15px;color:#262626">Create and Share</div>
<div class="t" style="left:1211px;top:162.2px;font-size:14.6px;color:#262626">Adobe PDF</div>
<div class="lbl" style="left:1244px;top:189px">Adobe Acrobat</div>

<!-- DOCUMENT TEXT -->
<div class="a" style="left:412.1px;top:242.90px;width:500px;height:29px;overflow:hidden"><div class="doc" style="left:0;top:0;line-height:28.38px">Con chó nhà em là một chú chó nhỏ thuộc</div></div>
<div class="a" style="left:913px;top:242.90px;width:300px;height:29px;overflow:hidden"><div class="doc" style="right:289.2px;top:0;line-height:28.38px;white-space:pre">giống </div><div class="doc" style="left:10.8px;top:0;line-height:28.38px">Phốc. Bộ lông của nó</div></div>
<div class="a" style="left:412.1px;top:271.30px;width:500px;height:29px;overflow:hidden"><div class="doc" style="left:0;top:0;line-height:28.38px">màu nâu nhạt, mượt mà và óng ánh. Đôi mắt</div></div>
<div class="a" style="left:913px;top:271.30px;width:300px;height:29px;overflow:hidden"><div class="doc" style="right:293.6px;top:0;line-height:28.38px;white-space:pre">tròn </div><div class="doc" style="left:6.4px;top:0;line-height:28.38px">xoe, đen láy, lúc nào</div></div>
<div class="a" style="left:412.1px;top:299.80px;width:500px;height:29px;overflow:hidden"><div class="doc" style="left:0;top:0;line-height:28.38px">cũng ánh lên vẻ tinh nghịch. Chiếc mũi nhỏ luôn</div></div>
<div class="a" style="left:913px;top:299.80px;width:300px;height:29px;overflow:hidden"><div class="doc" style="right:299.6px;top:0;line-height:28.38px;white-space:pre">khịt </div><div class="doc" style="left:0.4px;top:0;line-height:28.38px">đánh hơi mọi thứ xung</div></div>
<div class="a" style="left:412.1px;top:328.30px;width:500px;height:29px;overflow:hidden"><div class="doc" style="left:0;top:0;line-height:28.38px">quanh. Đôi tai dựng đứng, mỗi khi nghe tiếng</div></div>
<div class="a" style="left:913px;top:328.30px;width:300px;height:29px;overflow:hidden"><div class="doc" style="right:288.0px;top:0;line-height:28.38px;white-space:pre">lạ </div><div class="doc" style="left:12.0px;top:0;line-height:28.38px">là vểnh lên ngay. Cái</div></div>
<div class="a" style="left:412.1px;top:356.80px;width:500px;height:29px;overflow:hidden"><div class="doc" style="left:0;top:0;line-height:28.38px">đuôi ngắn ngủn của nó luôn ngoe nguẩy, đặc</div></div>
<div class="a" style="left:913px;top:356.80px;width:300px;height:29px;overflow:hidden"><div class="doc" style="right:287.0px;top:0;line-height:28.38px;white-space:pre">đặc </div><div class="doc" style="left:13.0px;top:0;line-height:28.38px">biệt mỗi lần em đi học</div></div>
<div class="doc" style="left:412.1px;top:385.30px;line-height:28.38px">về.</div>
<div class="a" style="left:412.1px;top:413.80px;width:500px;height:29px;overflow:hidden"><div class="doc" style="left:0;top:0;line-height:28.38px">Nó rất thông minh, biết làm theo những lệnh như</div></div>
<div class="a" style="left:913px;top:413.80px;width:300px;height:29px;overflow:hidden"><div class="doc" style="right:288.3px;top:0;line-height:28.38px;white-space:pre">như </div><div class="doc" style="left:11.7px;top:0;line-height:28.38px">“ngồi xuống” hay “bắt</div></div>
<div class="doc" style="left:412.1px;top:442.30px;line-height:28.38px">tay”. Chú chó này rất thích chạy nhảy, chơi đùa trong sân vườn. Dù nghịch ngợm</div>
<div class="doc" style="left:412.1px;top:470.80px;line-height:28.38px">nhưng nó rất ngoan, luôn biết giữ nhà và bảo vệ mọi người. Đối với em, chú chó là</div>
<div class="doc" style="left:412.1px;top:499.30px;line-height:28.38px">một người bạn đáng yêu và trung thành.</div>

<!-- MENU -->
<div class="a" style="left:659px;top:150px;width:254px;height:309px;background:#fff;border:1px solid #b8b8b8;border-radius:0 0 5px 5px;box-shadow:1px 3px 9px rgba(0,0,0,0.25)"></div>
<div class="a" style="left:661px;top:185px;width:250px;height:34px;background:#c5c5c5"></div>
<div class="a" style="left:658px;top:150px;width:256px;height:213px;border:3.5px solid #f53b40;border-radius:4px"></div>
<div class="t" style="left:706px;top:161.1px;font-size:15px;color:#444">1.0</div>
<div class="t" style="left:706px;top:195.2px;font-size:15px;color:#333">1.15</div>
<div class="t" style="left:706px;top:229.1px;font-size:15px;color:#444">1.5</div>
<div class="t" style="left:706px;top:263.1px;font-size:15px;color:#444">2.0</div>
<div class="t" style="left:706px;top:297.1px;font-size:15px;color:#444">2.5</div>
<div class="t" style="left:706px;top:331.1px;font-size:15px;color:#444">3.0</div>
<div class="t" style="left:706px;top:364.8px;font-size:15.6px;transform:scaleX(0.96);transform-origin:0 0;color:#444">Line Spacing Options...</div>
<div class="a" style="left:661px;top:389px;width:250px;height:1px;background:#e1e1e1"></div>
<svg class="a" style="left:668px;top:397px" width="20" height="20" viewBox="0 0 20 20">
 <path d="M6.5 1.2 V6.8" stroke="#3a78c2" stroke-width="1.2"/><path d="M3.8 4.6 L6.5 7.4 L9.2 4.6" fill="none" stroke="#3a78c2" stroke-width="1.3"/>
 <path d="M1 9.5 H17 M1 12.5 H17 M1 15.5 H17 M1 18.5 H17" stroke="#666" stroke-width="1"/>
</svg>
<div class="t" style="left:705px;top:399.6px;font-size:15.6px;transform:scaleX(0.97);transform-origin:0 0;color:#444">Add Space <u>B</u>efore Paragraph</div>
<svg class="a" style="left:668px;top:431px" width="20" height="20" viewBox="0 0 20 20">
 <path d="M1 1.5 H18 M1 4.5 H13 M1 7.5 H18" stroke="#666" stroke-width="1"/>
 <path d="M7 10 V18" stroke="#3a78c2" stroke-width="1.6"/><path d="M3.6 14.6 L7 18.3 L10.4 14.6" fill="none" stroke="#3a78c2" stroke-width="1.8"/>
</svg>
<div class="t" style="left:705px;top:434px;font-size:15.6px;transform:scaleX(0.985);transform-origin:0 0;color:#444">Add Space <u>A</u>fter Paragraph</div>
<div id="frame" class="a"></div>
</body></html>
